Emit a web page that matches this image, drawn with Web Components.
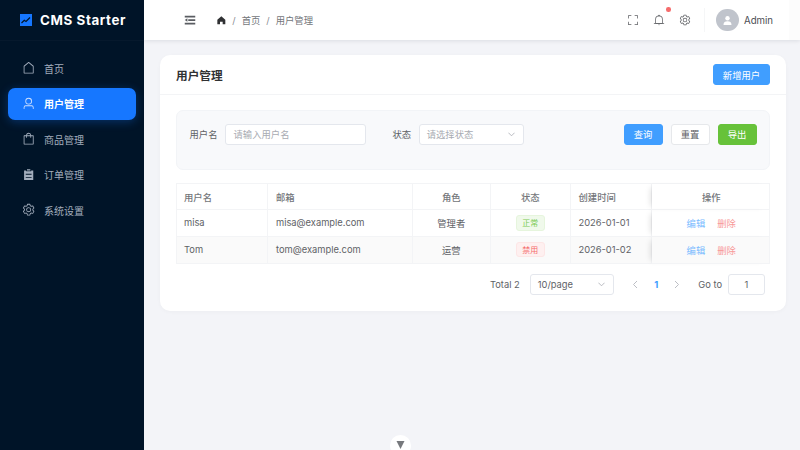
<!DOCTYPE html>
<html><head><meta charset="utf-8">
<style>
html,body{margin:0;height:100%;overflow:hidden}
body{font-family:Inter,"Noto Sans CJK SC",sans-serif;font-size:9.33px;color:#606266}
</style></head><body>
<app-shell>
  <side-nav slot="side"></side-nav>
  <top-bar slot="top"></top-bar>
  <user-page slot="main"></user-page>
</app-shell>
<script>
const FONT='Inter,"Noto Sans CJK SC",sans-serif';
const I={
house:`<path d="M192 413.952V896h640V413.952L512 147.328 192 413.952zM139.52 374.4l352-293.312a32 32 0 0 1 40.96 0l352 293.312A32 32 0 0 1 896 398.976V928a32 32 0 0 1-32 32H160a32 32 0 0 1-32-32V398.976a32 32 0 0 1 11.52-24.576z"/>`,
user:`<path d="M512 512a192 192 0 1 0 0-384 192 192 0 0 0 0 384zm0 64a256 256 0 1 1 0-512 256 256 0 0 1 0 512zm320 320v-96a96 96 0 0 0-96-96H288a96 96 0 0 0-96 96v96a32 32 0 1 1-64 0v-96a160 160 0 0 1 160-160h448a160 160 0 0 1 160 160v96a32 32 0 1 1-64 0z"/>`,
bag:`<path d="M704 320v96a32 32 0 0 1-32 32h-32V320H384v128h-32a32 32 0 0 1-32-32v-96H192v576h640V320H704zm-384-64a192 192 0 1 1 384 0h160a32 32 0 0 1 32 32v640a32 32 0 0 1-32 32H160a32 32 0 0 1-32-32V288a32 32 0 0 1 32-32h160zm64 0h256a128 128 0 1 0-256 0z"/>`,
list:`<path d="M704 192h160v736H160V192h160v64h384v-64zM288 512h448v-64H288v64zm0 256h448v-64H288v64zm96-576V96h256v96H384z"/>`,
gear:`<path d="M600.704 64a32 32 0 0 1 30.464 22.208l35.2 109.376c14.784 7.232 28.928 15.36 42.432 24.512l112.384-24.192a32 32 0 0 1 34.432 15.36L944.32 364.8a32 32 0 0 1-4.032 37.504l-77.12 85.12a357.12 357.12 0 0 1 0 49.024l77.12 85.248a32 32 0 0 1 4.032 37.504l-88.704 153.6a32 32 0 0 1-34.432 15.296L708.8 803.904c-13.44 9.088-27.648 17.28-42.368 24.512l-35.264 109.376A32 32 0 0 1 600.704 960H423.296a32 32 0 0 1-30.464-22.208L357.696 828.48a351.616 351.616 0 0 1-42.56-24.64l-112.32 24.256a32 32 0 0 1-34.432-15.36L79.68 659.2a32 32 0 0 1 4.032-37.504l77.12-85.248a357.12 357.12 0 0 1 0-48.896l-77.12-85.248A32 32 0 0 1 79.68 364.8l88.704-153.6a32 32 0 0 1 34.432-15.296l112.32 24.256c13.568-9.152 27.776-17.408 42.56-24.64l35.2-109.312A32 32 0 0 1 423.232 64H600.64zm-23.424 64H446.72l-36.352 113.088-24.512 11.968a294.113 294.113 0 0 0-34.816 20.096l-22.656 15.36-116.224-25.088-65.28 113.152 79.68 88.192-1.92 27.136a293.12 293.12 0 0 0 0 40.192l1.92 27.136-79.808 88.192 65.344 113.152 116.224-25.024 22.656 15.296a294.113 294.113 0 0 0 34.816 20.096l24.512 11.968L446.72 896h130.688l36.48-113.152 24.448-11.904a288.282 288.282 0 0 0 34.752-20.096l22.592-15.296 116.288 25.024 65.28-113.152-79.744-88.192 1.92-27.136a293.12 293.12 0 0 0 0-40.256l-1.92-27.136 79.808-88.128-65.344-113.152-116.288 24.96-22.592-15.232a287.616 287.616 0 0 0-34.752-20.096l-24.448-11.904L577.344 128zM512 320a192 192 0 1 1 0 384 192 192 0 0 1 0-384zm0 64a128 128 0 1 0 0 256 128 128 0 0 0 0-256z"/>`,
bell:`<path d="M512 64a64 64 0 0 1 64 64v64H448v-64a64 64 0 0 1 64-64z"/><path d="M256 768h512V448a256 256 0 1 0-512 0v320zm256-640a320 320 0 0 1 320 320v384H192V448a320 320 0 0 1 320-320z"/><path d="M96 768h832q32 0 32 32t-32 32H96q-32 0-32-32t32-32zm352 128h128a64 64 0 0 1-128 0z"/>`,
full:`<path d="m160 96.064 192 .192a32 32 0 0 1 0 64l-192-.192V352a32 32 0 0 1-64 0V96h64v.064zm0 831.872V928H96V672a32 32 0 1 1 64 0v191.936l192-.192a32 32 0 1 1 0 64l-192 .192zM864 96.064V96h64v256a32 32 0 1 1-64 0V160.064l-192 .192a32 32 0 1 1 0-64l192-.192zm0 831.872-192-.192a32 32 0 0 1 0-64l192 .192V672a32 32 0 1 1 64 0v256h-64v-.064z"/>`,
fold:`<path d="M896 192H128v128h768V192zm0 256H384v128h512V448zm0 256H128v128h768V704zM320 384 128 512l192 128V384z"/>`,
homeF:`<path d="M512 128 128 447.936V896h255.936V640H640v256h255.936V447.936z"/>`
};
const ic=(n,s,c)=>`<svg width="${s}" height="${s}" viewBox="0 0 1024 1024" fill="${c||'currentColor'}" style="display:block;flex:none">${I[n]}</svg>`;
function def(name,html){customElements.define(name,class extends HTMLElement{constructor(){super();this.attachShadow({mode:'open'}).innerHTML=html;}});}
def('app-shell',`<style>
:host{display:grid;grid-template-columns:144px 1fr;grid-template-rows:40px 1fr;width:800px;height:450px;background:#f3f4f8;position:relative;overflow:hidden}
::slotted([slot=side]){grid-row:1/3}
.main{padding:15px 14px 0 16px;min-width:0}
.fold{position:absolute;left:390px;top:435px;width:21px;height:21px;border-radius:50%;background:#fff;display:flex;justify-content:center;padding-top:6px;box-sizing:border-box}
</style><slot name="side"></slot><slot name="top"></slot><div class="main"><slot name="main"></slot></div>
<div class="fold"><svg width="9" height="8" viewBox="0 0 9 8"><path d="M.5 0h8L4.500 8z" fill="#77797d"/></svg></div>`);
customElements.define('nav-item',class extends HTMLElement{constructor(){super();
const active=this.hasAttribute('active');
this.attachShadow({mode:'open'}).innerHTML=`<style>
:host{display:flex;align-items:center;height:32px;border-radius:7px;padding-left:14.33px;gap:8.33px;font-size:10px;color:#a3aebd;${active?'background:#1677ff;color:#fff;font-weight:700;box-shadow:0 2px 10px rgba(22,119,255,.3)':''}}
span{display:flex;${active?'color:#cfe1ff':'color:#a3aebd'}}
</style><span>${ic(this.getAttribute('icon'),13.33)}</span><slot></slot>`}});
def('side-nav',`<style>
:host{display:flex;flex-direction:column;background:#001428;font-family:${FONT}}
.brand{height:41px;box-sizing:border-box;border-bottom:1px solid #06192d;display:flex;align-items:center;padding-left:20px;gap:8px;color:#fff;font-weight:700;font-size:13.33px;letter-spacing:.6px}
.brand svg{flex:none}
nav{display:flex;flex-direction:column;gap:3.5px;padding:11px 8px 0}
</style><div class="brand"><svg width="12" height="12" viewBox="0 0 12 12"><rect width="12" height="12" fill="#1677ff"/><path d="M1.500 9L4.300 6.300 6 7.500 10 3.500" fill="none" stroke="#001428" stroke-width="1.200"/></svg><span>CMS Starter</span></div>
<nav>
<nav-item icon="house">首页</nav-item>
<nav-item icon="user" active>用户管理</nav-item>
<nav-item icon="bag">商品管理</nav-item>
<nav-item icon="list">订单管理</nav-item>
<nav-item icon="gear">系统设置</nav-item>
</nav>`);
def('top-bar',`<style>
:host{display:flex;align-items:center;height:40px;background:linear-gradient(to right,#fff 645px,#fcfcfc 645px);box-shadow:0 1px 4px rgba(0,21,41,.1);position:relative;z-index:2;font-family:${FONT};font-size:9.33px;color:#73767a}
.burger{margin-left:38.6px;color:#5a5d62}
.crumb{display:flex;align-items:center;margin-left:19px}
.crumb i{font-style:normal;margin:0 6px;color:#8a8d92}
.right{margin-left:auto;display:flex;align-items:center;color:#606266;padding-right:27px}
.tool{position:relative;display:block;margin-right:14px}
.dot{position:absolute;right:-6px;top:-7px;width:4.500px;height:4.500px;border-radius:50%;background:#f56c6c}
.sep{width:1px;height:24px;background:#f5f6f7;margin:0 11.500px 0 -1px}
.ava{width:22.500px;height:22.500px;border-radius:50%;background:#c0c4cc;display:flex;align-items:center;justify-content:center;margin-right:5.500px}
.name{font-size:9.67px;color:#4a4d52;width:29px;white-space:nowrap}
</style>
<span class="burger">${ic('fold',14)}</span>
<div class="crumb"><span style="color:#303133">${ic('homeF',10.67)}</span><i>/</i><span>首页</span><i>/</i><span>用户管理</span></div>
<div class="right">
<span class="tool">${ic('full',12)}</span>
<span class="tool">${ic('bell',12)}<span class="dot"></span></span>
<span class="tool">${ic('gear',12)}</span>
<span class="sep"></span>
<span class="ava"><svg width="9" height="9" viewBox="0 0 9 9"><circle cx="4.500" cy="2.300" r="2.200" fill="#fff"/><path d="M.5 9c0-2.800 1.500-3.800 4-3.800s4 1 4 3.800z" fill="#fff"/></svg></span>
<span class="name">Admin</span>
</div>`);
customElements.define('ui-btn',class extends HTMLElement{constructor(){super();
const k=this.getAttribute('kind');
const c={primary:'background:#409eff;color:#fff;border-color:#409eff',success:'background:#67c23a;color:#fff;border-color:#67c23a',plain:'background:#fff;color:#606266;border-color:#e6e8eb'}[k];
this.attachShadow({mode:'open'}).innerHTML=`<style>:host{display:inline-flex;align-items:center;justify-content:center;height:21px;box-sizing:border-box;border:1px solid;border-radius:3px;font-size:9.33px;${c};width:${this.getAttribute('w')||'39'}px}</style><slot></slot>`}});
customElements.define('ui-select',class extends HTMLElement{constructor(){super();
const w=this.getAttribute('w');
this.attachShadow({mode:'open'}).innerHTML=`<style>:host{display:flex;align-items:center;justify-content:space-between;height:21px;box-sizing:border-box;width:${w}px;background:#fff;border:1px solid #e4e7ed;border-radius:3px;padding:0 8px 0 6.5px;font-size:9.33px;color:${this.hasAttribute('val')?'#606266':'#a8abb2'}}</style><slot></slot><svg width="7" height="5" viewBox="0 0 7 5"><path d="M.4.700L3.500 3.800 6.600.700" fill="none" stroke="#a8abb2" stroke-width=".8"/></svg>`}});
def('data-table',`<style>
:host{display:block;font-size:9.33px;color:#606266}
.t{display:grid;grid-template-columns:91px 144.5px 78.5px 79.5px 81px 1fr;border-top:1px solid #f3f4f6;border-left:1px solid #f3f4f6;border-right:1px solid #f3f4f6;position:relative}
.t>div{height:26.8px;display:flex;align-items:center;padding:0 8px;box-sizing:border-box;border-right:1px solid #f3f4f6;border-bottom:1px solid #f3f4f6;white-space:nowrap}
.t>div.first{padding-left:7px}
.t>div.last{border-right:0;justify-content:center;gap:12px;padding:0 6px 0 8px;box-shadow:-5px 0 6px -4px rgba(0,0,0,.14);position:relative}
.t>div.c{justify-content:center}
.t>div.h{font-weight:500;color:#73767a;height:26px}
.t>div.alt{background:#fafafa}
.tag{display:inline-flex;align-items:center;justify-content:center;width:29px;height:15.5px;border-radius:3px;font-size:8px;box-sizing:border-box;border:1px solid}
.ok{background:#f0f9eb;border-color:#e6f5dd;color:#7ccb55}
.no{background:#fef0f0;border-color:#fde6e6;color:#f56c6c}
.blue{color:#79bbff}.red{color:#f89898}
</style><div class="t">
<div class="h first">用户名</div><div class="h">邮箱</div><div class="h c">角色</div><div class="h c">状态</div><div class="h">创建时间</div><div class="h c last">操作</div>
<div class="first">misa</div><div>misa@example.com</div><div class="c">管理者</div><div class="c"><span class="tag ok">正常</span></div><div>2026-01-01</div><div class="last c"><span class="blue">编辑</span><span class="red">删除</span></div>
<div class="alt first">Tom</div><div class="alt">tom@example.com</div><div class="alt c">运营</div><div class="alt c"><span class="tag no">禁用</span></div><div class="alt">2026-01-02</div><div class="alt last c"><span class="blue">编辑</span><span class="red">删除</span></div>
</div>`);
def('user-page',`<style>
:host{display:block;background:#fff;border-radius:10px;box-shadow:0 1px 4px rgba(0,0,0,.03);font-family:${FONT};height:256px;box-sizing:border-box;width:626px}
.head{height:40px;box-sizing:border-box;border-bottom:1px solid #f3f4f6;display:flex;align-items:center;justify-content:space-between;padding:0 16px}
h2{margin:0;font-size:11.67px;font-weight:700;color:#303133}
.body{padding:15px 16px 0}
.search{height:60px;box-sizing:border-box;background:#f8f9fb;border:1px solid #f2f4f7;border-radius:7px;display:flex;align-items:flex-start;padding:12.7px 12.5px 0 12.5px;font-size:9.33px;color:#606266}
.lab{height:21px;display:flex;align-items:center;margin-right:8px}
.inp{width:141px;height:21px;box-sizing:border-box;background:#fff;border:1px solid #e4e7ed;border-radius:3px;padding:0 7px;display:flex;align-items:center;color:#a8abb2;margin-right:26px}
.btns{margin-left:auto;display:flex;gap:8px}
data-table{margin-top:13px}
.pager{display:flex;align-items:center;height:21px;margin-top:10.5px;padding-right:5px;font-size:9.33px;color:#606266;justify-content:flex-end}
.arrow{display:block;flex:none}
.num{color:#409eff;font-weight:700;width:36px;text-align:center}
.goto{width:37px;height:21px;box-sizing:border-box;border:1px solid #e4e7ed;border-radius:3px;background:#fff;display:flex;align-items:center;justify-content:center;margin-left:6px}
</style>
<div class="head"><h2>用户管理</h2><ui-btn kind="primary" w="57">新增用户</ui-btn></div>
<div class="body">
<div class="search"><span class="lab">用户名</span><span class="inp">请输入用户名</span><span class="lab">状态</span><ui-select w="105">请选择状态</ui-select>
<div class="btns"><ui-btn kind="primary">查询</ui-btn><ui-btn kind="plain">重置</ui-btn><ui-btn kind="success">导出</ui-btn></div></div>
<data-table></data-table>
<div class="pager"><span>Total 2</span><ui-select w="84" val style="margin:0 18px 0 10.5px">10/page</ui-select>
<svg class="arrow" width="6" height="9" viewBox="0 0 6 9"><path d="M5 1L1.500 4.500 5 8" fill="none" stroke="#b4b7bd" stroke-width=".9"/></svg>
<span class="num">1</span>
<svg class="arrow" width="6" height="9" viewBox="0 0 6 9"><path d="M1 1L4.500 4.500 1 8" fill="none" stroke="#b4b7bd" stroke-width=".9"/></svg>
<span style="margin-left:18px">Go to</span><span class="goto">1</span></div>
</div>`);
</script></body></html>
